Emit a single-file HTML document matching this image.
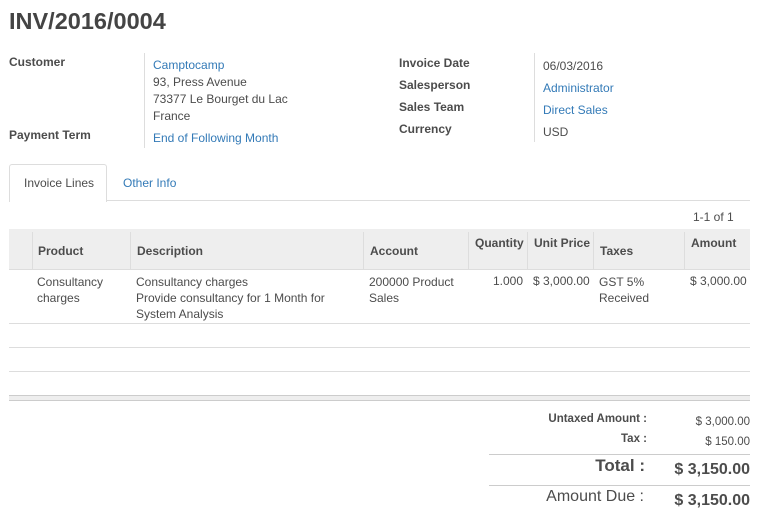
<!DOCTYPE html>
<html><head><style>
body{margin:0;width:761px;height:514px;background:#fff;font-family:"Liberation Sans",sans-serif;color:#4c4c4c;font-size:12px;position:relative;overflow:hidden}
.a{position:absolute;white-space:nowrap}
.b{font-weight:bold}
.l{color:#337ab7}
.h{position:absolute;height:1px;background:#ddd;left:9px;width:741px}
.v{position:absolute;width:1px;background:#ddd}
</style></head><body>
<div class="a b" style="left:9px;top:8px;font-size:23.5px;color:#444">INV/2016/0004</div>
<div class="a b" style="left:9px;top:55px">Customer</div>
<div class="a b" style="left:9px;top:128px">Payment Term</div>
<div class="v" style="left:144px;top:53px;height:95px"></div>
<div class="a l" style="left:153px;top:58px">Camptocamp</div>
<div class="a" style="left:153px;top:75px">93, Press Avenue</div>
<div class="a" style="left:153px;top:92px">73377 Le Bourget du Lac</div>
<div class="a" style="left:153px;top:109px">France</div>
<div class="a l" style="left:153px;top:131px">End of Following Month</div>
<div class="a b" style="left:399px;top:56px">Invoice Date</div>
<div class="a b" style="left:399px;top:78px">Salesperson</div>
<div class="a b" style="left:399px;top:100px">Sales Team</div>
<div class="a b" style="left:399px;top:122px">Currency</div>
<div class="v" style="left:534px;top:53px;height:89px"></div>
<div class="a" style="left:543px;top:59px">06/03/2016</div>
<div class="a l" style="left:543px;top:81px">Administrator</div>
<div class="a l" style="left:543px;top:103px">Direct Sales</div>
<div class="a" style="left:543px;top:125px">USD</div>
<div class="h" style="top:200px"></div>
<div style="position:absolute;left:9px;top:164px;width:96px;height:37px;border:1px solid #ddd;border-bottom:none;border-radius:3px 3px 0 0;background:#fff"></div>
<div class="a" style="left:24px;top:176px">Invoice Lines</div>
<div class="a l" style="left:123px;top:176px">Other Info</div>
<div class="a" style="left:693px;top:210px">1-1 of 1</div>
<div style="position:absolute;left:9px;top:229px;width:741px;height:40px;background:#eee"></div>
<div class="h" style="top:269px"></div>
<div class="v" style="left:32px;top:232px;height:37px"></div>
<div class="v" style="left:130px;top:232px;height:37px"></div>
<div class="v" style="left:363px;top:232px;height:37px"></div>
<div class="v" style="left:468px;top:232px;height:37px"></div>
<div class="v" style="left:527px;top:232px;height:37px"></div>
<div class="v" style="left:593px;top:232px;height:37px"></div>
<div class="v" style="left:684px;top:232px;height:37px"></div>
<div class="a b" style="left:38px;top:244px">Product</div>
<div class="a b" style="left:137px;top:244px">Description</div>
<div class="a b" style="left:370px;top:244px">Account</div>
<div class="a b" style="left:475px;top:236px">Quantity</div>
<div class="a b" style="left:534px;top:236px">Unit Price</div>
<div class="a b" style="left:600px;top:244px">Taxes</div>
<div class="a b" style="left:691px;top:236px">Amount</div>
<div class="a" style="left:37px;top:274px;line-height:16px">Consultancy<br>charges</div>
<div class="a" style="left:136px;top:274px;line-height:16px">Consultancy charges<br>Provide consultancy for 1 Month for<br>System Analysis</div>
<div class="a" style="left:369px;top:274px;line-height:16px">200000 Product<br>Sales</div>
<div class="a" style="left:493px;top:274px">1.000</div>
<div class="a" style="left:533px;top:274px">$ 3,000.00</div>
<div class="a" style="left:599px;top:274px;line-height:16px">GST 5%<br>Received</div>
<div class="a" style="left:690px;top:274px">$ 3,000.00</div>
<div class="h" style="top:323px"></div>
<div class="h" style="top:347px"></div>
<div class="h" style="top:371px"></div>
<div style="position:absolute;left:9px;top:395px;width:741px;height:6px;background:#eee;border-top:1px solid #ccc;border-bottom:1px solid #ccc;box-sizing:border-box"></div>
<div class="a b" style="right:114px;top:413px;font-size:11.5px">Untaxed Amount :</div>
<div class="a" style="right:11px;top:416px;font-size:11.5px">$ 3,000.00</div>
<div class="a b" style="right:114px;top:433px;font-size:11.5px">Tax :</div>
<div class="a" style="right:11px;top:436px;font-size:11.5px">$ 150.00</div>
<div style="position:absolute;left:489px;top:454px;width:261px;height:1px;background:#ccc"></div>
<div class="a b" style="right:116px;top:456px;font-size:17px">Total :</div>
<div class="a b" style="right:11px;top:461px;font-size:16px">$ 3,150.00</div>
<div style="position:absolute;left:489px;top:485px;width:261px;height:1px;background:#ccc"></div>
<div class="a" style="right:117px;top:488px;font-size:16px">Amount Due :</div>
<div class="a b" style="right:11px;top:492px;font-size:16px">$ 3,150.00</div>
</body></html>
